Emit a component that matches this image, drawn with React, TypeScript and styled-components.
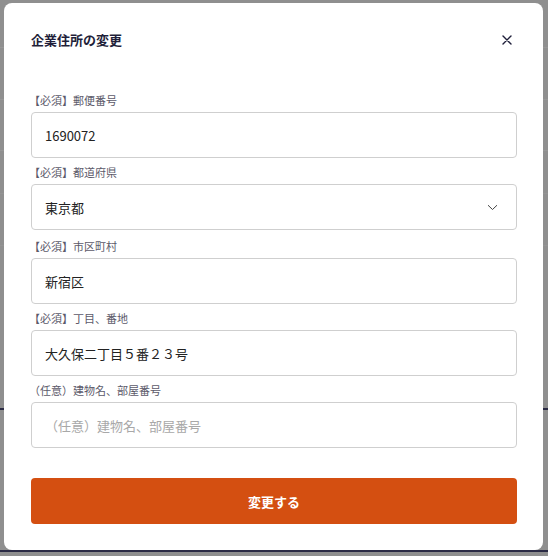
import React from "react";
import styled, { createGlobalStyle } from "styled-components";

const GlobalStyle = createGlobalStyle`
  html, body {
    margin: 0;
    padding: 0;
  }
  body {
    font-family: "Noto Sans CJK JP", "Noto Sans", sans-serif;
    background-color: #8f8f8f;
    background-image:
      linear-gradient(to bottom, transparent 47px, #979797 47px, #979797 48px, transparent 48px),
      linear-gradient(to bottom, transparent 99px, #979797 99px, #979797 100px, transparent 100px),
      linear-gradient(to bottom, transparent 150px, #979797 150px, #979797 151px, transparent 151px),
      linear-gradient(to bottom, transparent 193px, #949494 193px, #949494 194px, transparent 194px),
      linear-gradient(to bottom, transparent 245px, #949494 245px, #949494 246px, transparent 246px),
      linear-gradient(to bottom, transparent 408px, #2b2b45 408px, #2b2b45 410px, transparent 410px),
      linear-gradient(to bottom, transparent 550px, #2b2b45 550px, #2b2b45 552px, transparent 552px);
    min-height: 556px;
  }
`;

const Backdrop = styled.div`
  padding: 3px 5px 0 4px;
  height: 556px;
  box-sizing: border-box;
`;

const Modal = styled.div`
  width: 539px;
  height: 547px;
  box-sizing: border-box;
  background: #ffffff;
  border-radius: 8px;
  padding: 28px 26px 26px 27px;
  display: flex;
  flex-direction: column;
`;

const Header = styled.div`
  display: flex;
  align-items: center;
  justify-content: space-between;
  height: 18px;
  margin-bottom: 42px;
`;

const Title = styled.h2`
  margin: 0;
  font-size: 13px;
  line-height: 18px;
  font-weight: 700;
  color: #1f1f3a;
`;

const CloseButton = styled.button`
  border: none;
  background: none;
  padding: 0;
  width: 18px;
  height: 18px;
  margin-right: 1px;
  display: flex;
  align-items: center;
  justify-content: center;
  cursor: pointer;
`;

const Form = styled.form`
  display: flex;
  flex-direction: column;
  gap: 5px;
`;

const Field = styled.label<{ $extra?: number }>`
  display: flex;
  flex-direction: column;
  margin-bottom: ${(p) => p.$extra ?? 0}px;
`;

const Label = styled.span`
  font-size: 11px;
  line-height: 18px;
  color: #5c5a6a;
  margin-bottom: 3px;
  margin-left: -2px;
`;

const Input = styled.input`
  height: 46px;
  box-sizing: border-box;
  border: 1px solid #cfcfcf;
  border-radius: 4px;
  padding: 0 13px;
  font-family: "Noto Sans CJK JP", "Noto Sans", sans-serif;
  font-size: 13px;
  color: #222222;
  background: #fff;
  outline: none;
  &::placeholder {
    color: #a8a8a8;
  }
`;

const SelectBox = styled.div`
  height: 46px;
  box-sizing: border-box;
  border: 1px solid #cfcfcf;
  border-radius: 4px;
  padding: 0 18px 0 13px;
  display: flex;
  align-items: center;
  justify-content: space-between;
  font-size: 13px;
  color: #222222;
`;

const Submit = styled.button`
  margin-top: 25px;
  height: 46px;
  border: none;
  border-radius: 4px;
  background: #d44f11;
  color: #ffffff;
  font-family: "Noto Sans CJK JP", "Noto Sans", sans-serif;
  font-size: 13px;
  font-weight: 700;
  cursor: pointer;
`;

export default function App() {
  return (
    <>
      <GlobalStyle />
      <Backdrop>
        <Modal>
          <Header>
            <Title>企業住所の変更</Title>
            <CloseButton aria-label="閉じる" type="button">
              <svg width="10" height="10" viewBox="0 0 10 10">
                <path d="M1 1 L9 9 M9 1 L1 9" stroke="#1f1f3a" strokeWidth="1.4" strokeLinecap="round" />
              </svg>
            </CloseButton>
          </Header>
          <Form onSubmit={(e) => e.preventDefault()}>
            <Field>
              <Label>【必須】郵便番号</Label>
              <Input defaultValue="1690072" />
            </Field>
            <Field $extra={2}>
              <Label>【必須】都道府県</Label>
              <SelectBox>
                <span>東京都</span>
                <svg width="11" height="7" viewBox="0 0 11 7">
                  <path d="M1 1.2 L5.5 5.5 L10 1.2" stroke="#444" strokeWidth="1" fill="none" />
                </svg>
              </SelectBox>
            </Field>
            <Field>
              <Label>【必須】市区町村</Label>
              <Input defaultValue="新宿区" />
            </Field>
            <Field>
              <Label>【必須】丁目、番地</Label>
              <Input defaultValue="大久保二丁目５番２３号" />
            </Field>
            <Field>
              <Label>（任意）建物名、部屋番号</Label>
              <Input placeholder="（任意）建物名、部屋番号" />
            </Field>
            <Submit type="submit">変更する</Submit>
          </Form>
        </Modal>
      </Backdrop>
    </>
  );
}
